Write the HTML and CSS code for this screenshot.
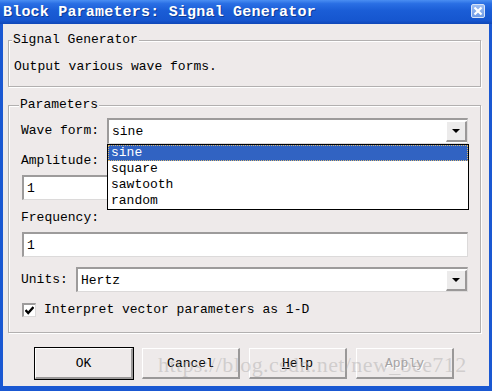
FILE: index.html
```html
<!DOCTYPE html>
<html lang="en">
<head>
  <meta charset="UTF-8">
  <title>Block Parameters: Signal Generator</title>
  <link rel="stylesheet" href="styles.css">
</head>
<body>

  <div class="window">
    <!-- Title bar -->
    <div class="titlebar">
      <span class="title">Block Parameters: Signal Generator</span>
      <span class="close-btn">
        <svg width="10" height="10" viewBox="0 0 10 10"><path d="M1.5 1.5 L8.5 8.5 M8.5 1.5 L1.5 8.5" stroke="#fff" stroke-width="2.2"/></svg>
      </span>
    </div>

    <div class="client">
      <!-- Block description -->
      <fieldset class="group group-desc">
        <legend>Signal Generator</legend>
        <div class="desc">Output various wave forms.</div>
      </fieldset>

      <!-- Parameters -->
      <fieldset class="group group-params">
        <legend>Parameters</legend>

        <div class="row row-wave">
          <span class="field-label label-wave">Wave form:</span>
          <div class="combo">
            <span class="combo-value">sine</span>
            <span class="combo-arrow"></span>
            <ul class="combo-list">
              <li class="selected">sine</li>
              <li>square</li>
              <li>sawtooth</li>
              <li>random</li>
            </ul>
          </div>
        </div>

        <div class="field-label label-amp">Amplitude:</div>
        <div class="textbox textbox-amp">1</div>

        <div class="field-label label-freq">Frequency:</div>
        <div class="textbox textbox-freq">1</div>

        <div class="row row-units">
          <span class="field-label label-units">Units:</span>
          <div class="combo">
            <span class="combo-value">Hertz</span>
            <span class="combo-arrow"></span>
          </div>
        </div>

        <div class="row row-check">
          <span class="checkbox">
            <svg width="9" height="9" viewBox="0 0 9 9"><path d="M0.5 4 L3.2 7 L8.5 1" stroke="#000" stroke-width="2.4" fill="none"/></svg>
          </span>
          <span>Interpret vector parameters as 1-D</span>
        </div>
      </fieldset>

      <!-- Dialog buttons -->
      <div class="buttons">
        <button class="btn btn-default">OK</button>
        <button class="btn">Cancel</button>
        <button class="btn"><u>H</u>elp</button>
        <button class="btn btn-disabled">Apply</button>
      </div>
    </div>

    <div class="watermark">https://blog.csdn.net/new_bee712</div>
  </div>

</body>
</html>
```

FILE: styles.css
```css
/* Page */
body {
  margin: 0;
  padding: 0;
  font-family: 'Liberation Mono', 'DejaVu Sans Mono', monospace;
  font-size: 13px;
  color: #000;
}

/* Window frame */
.window {
  width: 492px;
  height: 391px;
  display: flex;
  flex-direction: column;
  background: #1a58d2;
  position: relative;
  overflow: hidden;
}

/* Title bar */
.titlebar {
  height: 24px;
  flex: 0 0 24px;
  display: flex;
  align-items: center;
  justify-content: space-between;
  padding: 0 7px 0 3px;
  background: linear-gradient(#4a8ef2 0%, #2a6fe4 15%, #1a5dd6 45%, #1656cf 85%, #0f47b8 100%);
}

.title {
  color: #fff;
  font-weight: bold;
  font-size: 15px;
  letter-spacing: 0.2px;
  text-shadow: 1px 1px 0 #0b3b98;
}

.close-btn {
  width: 14px;
  height: 14px;
  box-sizing: border-box;
  border: 1px solid #d8e4f8;
  border-radius: 2px;
  background: linear-gradient(#9cbcf2, #6f9ce8);
  display: flex;
  align-items: center;
  justify-content: center;
  margin-top: -2px;
}

/* Dialog client area */
.client {
  flex: 1;
  margin: 0 3px 5px 3px;
  padding: 8px 8px 0 5px;
  background: #eeeaea;
}

/* Etched group boxes */
.group {
  margin: 0;
  border: 1px solid #b2b0b0;
  box-shadow: inset 1px 1px 0 #fff, 1px 1px 0 #fff;
  min-width: 0;
}

.group legend {
  padding: 0 1px;
  margin-left: -2px;
  line-height: 16px;
  background: #eeeaea;
}

.group-desc {
  padding: 11px 12px 11px 5px;
}

.desc {
  line-height: 16px;
}

.group-params {
  margin-top: 10px;
  padding: 5px 12px 14px 12px;
}

/* Rows and labels */
.row {
  display: flex;
  align-items: center;
}

.field-label {
  line-height: 16px;
}

.label-wave {
  flex: 0 0 86px;
}

.label-units {
  flex: 0 0 55px;
}

.label-amp {
  margin-top: 9px;
}

.label-freq {
  margin-top: 10px;
}

/* Sunken text boxes */
.textbox {
  box-sizing: border-box;
  height: 25px;
  margin-left: 1px;
  padding-left: 3px;
  line-height: 23px;
  background: #fff;
  border-top: 2px solid #9d9b9b;
  border-left: 2px solid #9d9b9b;
  border-right: 1px solid #dcdada;
  border-bottom: 1px solid #dcdada;
}

.textbox-amp {
  margin-top: 6px;
}

.textbox-freq {
  margin-top: 6px;
}

/* Combo boxes */
.combo {
  flex: 1;
  position: relative;
  box-sizing: border-box;
  height: 26px;
  display: flex;
  align-items: center;
  justify-content: space-between;
  background: #fff;
  border-top: 2px solid #9d9b9b;
  border-left: 2px solid #9d9b9b;
  border-right: 1px solid #dcdada;
  border-bottom: 1px solid #dcdada;
}

.row-units {
  margin-top: 10px;
}

.row-units .combo {
  height: 25px;
}

.combo-value {
  padding-left: 3px;
}

.combo-arrow {
  width: 21px;
  height: 21px;
  box-sizing: border-box;
  margin-right: 0;
  background: #ecebeb;
  border-top: 1px solid #fff;
  border-left: 1px solid #fff;
  border-right: 2px solid #9a9898;
  border-bottom: 2px solid #9a9898;
  position: relative;
}

.combo-arrow::after {
  content: '';
  position: absolute;
  left: 5px;
  top: 7px;
  border-left: 4px solid transparent;
  border-right: 4px solid transparent;
  border-top: 4px solid #000;
}

/* Open dropdown list */
.combo-list {
  position: absolute;
  top: 24px;
  left: -2px;
  right: -2px;
  margin: 0;
  padding: 0;
  list-style: none;
  background: #fff;
  border: 1px solid #000;
  z-index: 2;
}

.combo-list li {
  line-height: 16px;
  padding-left: 3px;
}

.combo-list li.selected {
  background: #3163c2;
  color: #fff;
  outline: 1px dotted #d8b870;
  outline-offset: -1px;
}

/* Checkbox */
.row-check {
  margin-top: 10px;
  line-height: 16px;
}

.checkbox {
  width: 14px;
  height: 14px;
  box-sizing: border-box;
  margin: 0 8px 0 1px;
  background: #fff;
  border-top: 2px solid #9d9b9b;
  border-left: 2px solid #9d9b9b;
  border-right: 1px solid #dcdada;
  border-bottom: 1px solid #dcdada;
  display: flex;
  align-items: center;
  justify-content: center;
}

/* Buttons */
.buttons {
  display: flex;
  justify-content: center;
  gap: 9px;
  margin-top: 15px;
}

.btn {
  width: 98px;
  height: 31px;
  box-sizing: border-box;
  font-family: inherit;
  font-size: 13px;
  background: #eeeaea;
  border-top: 1px solid #fff;
  border-left: 1px solid #fff;
  border-right: 2px solid #9a9898;
  border-bottom: 2px solid #9a9898;
  padding: 0;
}

.btn-default {
  outline: 1px solid #000;
  outline-offset: 0;
}

.btn-disabled {
  color: #a4a2a2;
  text-shadow: 1px 1px 0 #fff;
}

/* Image watermark */
.watermark {
  position: absolute;
  left: 158px;
  top: 352px;
  font-family: 'Liberation Serif', serif;
  font-size: 22px;
  line-height: 25px;
  color: rgba(170, 168, 168, 0.45);
  letter-spacing: 0.4px;
  pointer-events: none;
}
```
